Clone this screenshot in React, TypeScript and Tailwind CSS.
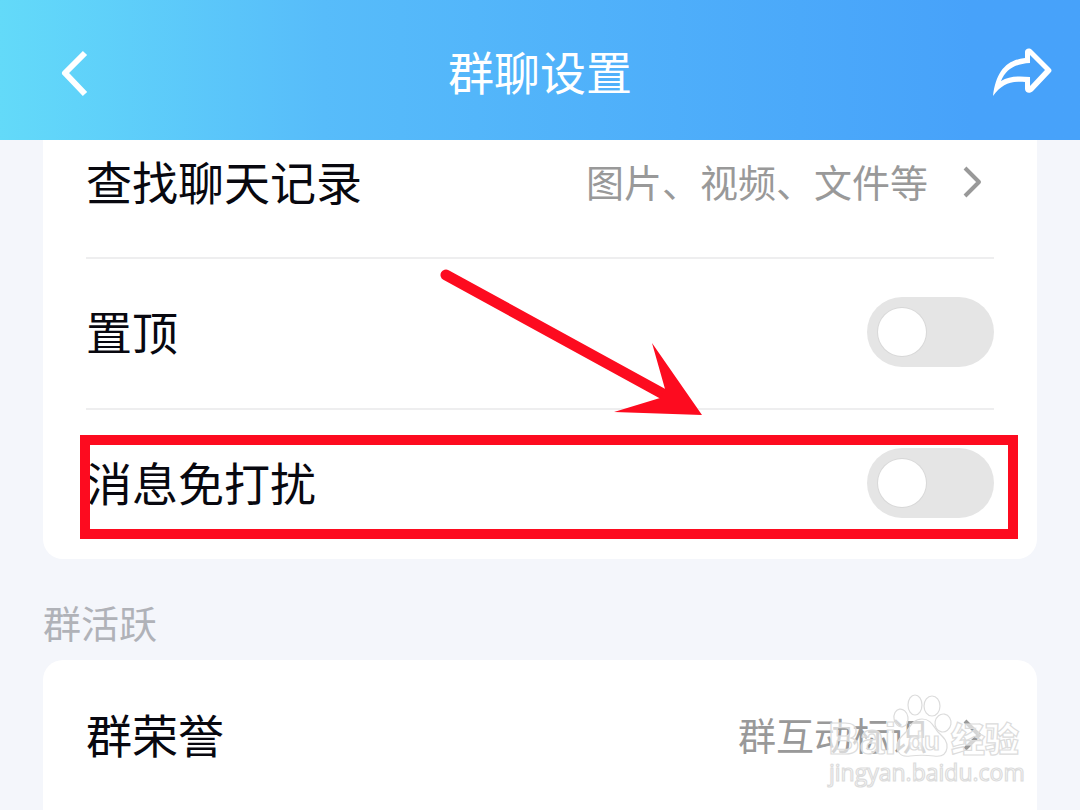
import type { ReactNode } from "react";

const labelText = "pb-1 text-[46px] leading-[60px] text-[#08080f]";
const valueText = "pb-0.5 text-[38px] leading-[50px] text-[#999999]";

function Chevron() {
  return (
    <svg className="h-9 w-6 shrink-0" viewBox="0 0 24 36" fill="none" aria-hidden="true">
      <path d="M3 4 17 18 3 32" stroke="#999" strokeWidth="4" strokeLinejoin="round" />
    </svg>
  );
}

function LinkRow({ label, value, className }: { label: string; value: string; className: string }) {
  return (
    <a href="#" className={`flex items-center justify-between ${className}`}>
      <span className={labelText}>{label}</span>
      <span className="flex items-center gap-[34px] pr-2">
        <span className={valueText}>{value}</span>
        <Chevron />
      </span>
    </a>
  );
}

function SwitchRow({ id, label, children }: { id: string; label: string; children?: ReactNode }) {
  return (
    <div className="relative flex h-[149px] items-center justify-between pb-[3px]">
      <label htmlFor={id} className={labelText}>
        {label}
      </label>
      <input
        id={id}
        type="checkbox"
        role="switch"
        className="flex h-[70px] w-[127px] shrink-0 appearance-none items-center rounded-full bg-[#e5e5e5] px-[11px] before:size-12 before:rounded-full before:bg-white before:ring-1 before:ring-[#d8d8d8] checked:justify-end checked:bg-[#4aa4fa]"
      />
      {children}
    </div>
  );
}

function Divider() {
  return <hr className="h-[2px] border-0 bg-[#eeeeef]" />;
}

function Arrow() {
  return (
    <svg
      className="pointer-events-none absolute top-[126px] left-[396px] h-[152px] w-[266px]"
      viewBox="0 0 266 152"
      aria-hidden="true"
    >
      <path d="M7 9 226 129" stroke="#fd0b1f" strokeWidth="11" strokeLinecap="round" />
      <path d="M263 149 175 146 221 132 226 123 213 77Z" fill="#fd0b1f" />
    </svg>
  );
}

function Watermark() {
  return (
    <svg
      className="pointer-events-none absolute right-[55px] bottom-[20px] h-[100px] w-[205px] overflow-visible"
      viewBox="0 0 205 100"
      fill="#ffffff"
      fillOpacity="0.6"
      stroke="#dcdcdc"
      strokeWidth="1.2"
      aria-hidden="true"
    >
      <text x="8" y="64" fontSize="44" fontWeight="700" className="font-['Liberation_Sans']">
        Bai
      </text>
      <ellipse cx="95" cy="15" rx="7" ry="10" />
      <ellipse cx="112" cy="16" rx="8" ry="10" />
      <ellipse cx="81" cy="28" rx="7" ry="9" transform="rotate(-10 81 28)" />
      <ellipse cx="123" cy="33" rx="8" ry="9" transform="rotate(10 123 33)" />
      <path d="M102 29c-9 0-12 8-16 13-5 5-10 9-9 16 1 6 6 9 13 8 8-1 16-1 24 0 7 1 12-1 13-8 1-7-4-11-9-16-5-6-7-13-16-13Z" />
      <text x="88" y="60" fontSize="26" fontWeight="700" className="font-['Liberation_Sans']">
        du
      </text>
      <text x="131" y="62" fontSize="34" fontWeight="900" className="font-['Noto_Sans_CJK_SC']">
        经验
      </text>
      <text x="9" y="91" fontSize="23" className="font-['Open_Sans']">
        jingyan.baidu.com
      </text>
    </svg>
  );
}

export default function App() {
  return (
    <div className="relative flex min-h-screen flex-col bg-[#f4f6fb] font-['Noto_Sans_CJK_SC',sans-serif]">
      <header className="grid h-[140px] grid-cols-[1fr_auto_1fr] items-center bg-linear-to-r from-[#63daf9] via-[#57bcfa] via-30% to-[#47a2fa] to-90% pt-2 text-white">
        <button type="button" aria-label="返回" className="ml-[56px] justify-self-start">
          <svg className="h-[50px] w-[36px]" viewBox="0 0 36 50" fill="none" aria-hidden="true">
            <path d="M29 4 9 24 29 45" stroke="currentColor" strokeWidth="6" strokeLinejoin="round" />
          </svg>
        </button>
        <h1 className="pb-2 text-[46px] leading-[60px]">群聊设置</h1>
        <button type="button" aria-label="分享" className="mr-[26px] justify-self-end">
          <svg className="h-[52px] w-[62px]" viewBox="0 0 62 52" fill="currentColor" aria-hidden="true">
            <path
              fillRule="evenodd"
              d="M1 48C4 24 14 12 33 10V4C33 1 37-1 40 2L58 20C60 22 60 23 58 25L41 43C38 46 33 45 33 41V34C18 33 10 36 1 48ZM9 33C17 28 27 28 38 29V38L53 22 38 7V15C23 16 14 21 9 33Z"
            />
          </svg>
        </button>
      </header>

      <main className="flex flex-1 flex-col px-[43px]">
        <section className="relative rounded-b-[20px] bg-white px-[43px]">
          <LinkRow label="查找聊天记录" value="图片、视频、文件等" className="h-[117px] pb-[33px]" />
          <Divider />
          <SwitchRow id="pin" label="置顶" />
          <Divider />
          <SwitchRow id="mute" label="消息免打扰">
            <div className="pointer-events-none absolute top-[25px] -right-6 -left-1.5 h-[104px] border-10 border-[#fd0b1f]" />
          </SwitchRow>
          <Arrow />
        </section>

        <h2 className="pt-[38px] pb-[13px] text-[38px] leading-[50px] text-[#b0b2b8]">群活跃</h2>

        <section className="flex-1 rounded-t-[20px] bg-white px-[43px]">
          <LinkRow label="群荣誉" value="群互动标识" className="h-[150px]" />
        </section>
      </main>
      <Watermark />
    </div>
  );
}
